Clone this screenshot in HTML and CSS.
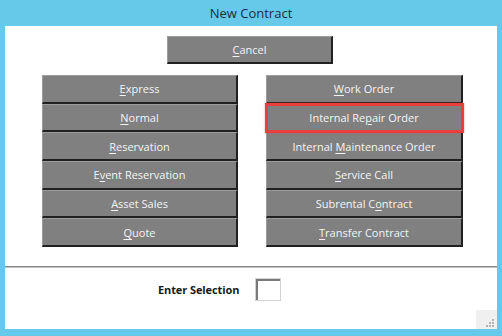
FILE: index.html
```html
<!DOCTYPE html>
<html>
<head>
<meta charset="utf-8">
<link rel="stylesheet" href="styles.css">
</head>
<body>
<div class="window">
  <div class="titlebar">New Contract</div>
  <div class="client">
    <div class="cancel-row">
      <div class="btn cancel"><span><u>C</u>ancel</span></div>
    </div>
    <div class="columns">
      <div class="col">
        <div class="btn"><span><u>E</u>xpress</span></div>
        <div class="btn"><span><u>N</u>ormal</span></div>
        <div class="btn"><span><u>R</u>eservation</span></div>
        <div class="btn"><span>E<u>v</u>ent Reservation</span></div>
        <div class="btn"><span><u>A</u>sset Sales</span></div>
        <div class="btn"><span><u>Q</u>uote</span></div>
      </div>
      <div class="col">
        <div class="btn"><span><u>W</u>ork Order</span></div>
        <div class="btn selected"><span>Internal Re<u>p</u>air Order</span></div>
        <div class="btn"><span>Internal <u>M</u>aintenance Order</span></div>
        <div class="btn"><span><u>S</u>ervice Call</span></div>
        <div class="btn"><span>Subrental C<u>o</u>ntract</span></div>
        <div class="btn"><span><u>T</u>ransfer Contract</span></div>
      </div>
    </div>
    <div class="separator"></div>
    <div class="entry">
      <span class="label">Enter Selection</span>
      <span class="input"></span>
    </div>
    <div class="grip">
      <svg width="21" height="19" viewBox="0 0 21 19">
        <g fill="#b4b4b4">
          <rect x="16" y="9" width="2" height="2"/>
          <rect x="13" y="12" width="2" height="2"/>
          <rect x="16" y="12" width="2" height="2"/>
          <rect x="10" y="15" width="2" height="2"/>
          <rect x="13" y="15" width="2" height="2"/>
          <rect x="16" y="15" width="2" height="2"/>
        </g>
      </svg>
    </div>
  </div>
</div>
</body>
</html>
```
FILE: styles.css
```css
html, body {
  margin: 0;
  padding: 0;
}
body {
  width: 502px;
  height: 336px;
  overflow: hidden;
  font-family: "Open Sans", "Noto Sans", sans-serif;
}
.window {
  width: 502px;
  height: 336px;
  background: #66c9e9;
  display: flex;
  flex-direction: column;
}
.titlebar {
  height: 26px;
  display: flex;
  align-items: center;
  justify-content: center;
  font-size: 13px;
  color: #1c2e3c;
}
.client {
  flex: 1;
  margin: 0 5px 7px 5px;
  background: #ffffff;
  display: flex;
  flex-direction: column;
  position: relative;
}
.cancel-row {
  padding: 10px 0 0 162px;
}
.btn {
  box-sizing: border-box;
  background: #808080;
  color: #f4f4f4;
  font-size: 11px;
  display: flex;
  align-items: center;
  justify-content: center;
  border-top: 1px solid #9c9c9c;
  border-left: 1px solid #9c9c9c;
  border-right: 2px solid #202020;
  border-bottom: 2px solid #202020;
  white-space: nowrap;
}
.btn u {
  text-underline-offset: 2px;
}
.cancel {
  width: 166px;
  height: 28px;
}
.columns {
  margin-top: 11px;
  padding-left: 37px;
  display: grid;
  grid-template-columns: 196px 197px;
  column-gap: 28px;
}
.col {
  display: grid;
  grid-template-rows: repeat(6, 1fr);
  height: 172px;
}
.selected {
  position: relative;
}
.selected::after {
  content: "";
  position: absolute;
  left: -2px;
  top: -2px;
  right: -3px;
  bottom: -3px;
  border: 3px solid #e8403f;
  box-shadow: 0 0 2px rgba(232, 64, 63, 0.5);
}
.separator {
  margin-top: 19px;
  height: 1px;
  border-top: 1px solid #858585;
  background: #c4c4c4;
}
.entry {
  display: flex;
  align-items: center;
  padding: 10px 0 0 153px;
  column-gap: 16px;
}
.label {
  font-weight: bold;
  font-size: 11px;
  color: #1a1a1a;
  letter-spacing: -0.1px;
}
.input {
  box-sizing: border-box;
  width: 26px;
  height: 23px;
  border: 1px solid #d2d2d2;
  box-shadow: inset 2px 2px 0 #7a7a7a;
  background: #ffffff;
}
.grip {
  position: absolute;
  right: 0;
  bottom: 0;
  width: 21px;
  height: 19px;
  background: #f0f0f0;
}
.grip svg {
  display: block;
}
```
